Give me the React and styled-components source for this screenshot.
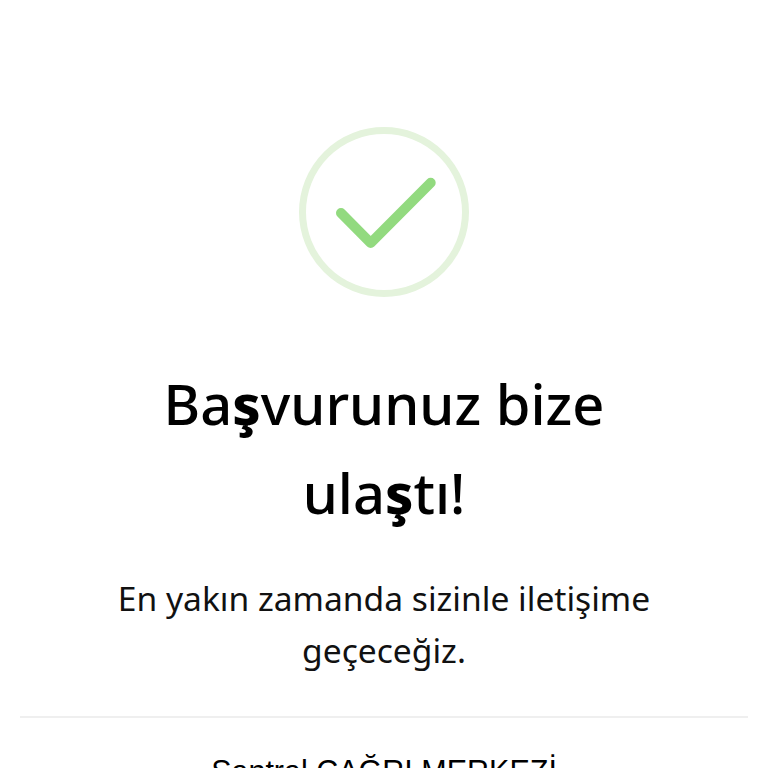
import styled, { createGlobalStyle } from "styled-components";

const GlobalStyle = createGlobalStyle`
    html, body {
        margin: 0;
        height: 768px;
        overflow: hidden;
        background: #FFFFFF;
    }
`

export default function App () {
    return (
        <>
        <GlobalStyle/>
        <Page>
            <SuccessIcon viewBox="0 0 172 172">
                <circle cx="86" cy="86" r="81.5" fill="none" stroke="#E4F3DC" strokeWidth="7"/>
                <polyline points="43,87 72.7,117 132.7,56.7" fill="none" stroke="#92DA7F" strokeWidth="10" strokeLinecap="round" strokeLinejoin="round"/>
            </SuccessIcon>
            <Title>Ba<Heavy>ş</Heavy>vurunuz bize<br/>ula<Heavy>ş</Heavy>tı!</Title>
            <Message>En yakın zamanda sizinle iletişime<br/>geçeceğiz.</Message>
            <Divider/>
            <CallCenter>Santral ÇAĞRI MERKEZİ</CallCenter>
        </Page>
        </>
    )
}

const Page = styled.div`
    display:flex;
    flex-direction:column;
    align-items:center;
    width:768px;
    height:768px;
    padding-top:126px;
    box-sizing:border-box;
    overflow:hidden;
    background:#FFFFFF;
    color:#000000;
    font-family:"Noto Sans", sans-serif;
`
const SuccessIcon = styled.svg`
    width:172px;
    height:172px;
    flex-shrink:0;
`
const Title = styled.h1`
    margin:61px 0 0 0;
    font-size:56px;
    font-weight:500;
    line-height:89px;
    text-align:center;
`
const Heavy = styled.span`
    font-weight:800;
`
const Message = styled.p`
    margin:35px 0 0 0;
    font-size:33.6px;
    font-weight:400;
    line-height:52px;
    color:#111111;
    text-align:center;
`
const Divider = styled.div`
    flex-shrink:0;
    width:728px;
    height:2px;
    margin-top:40px;
    background:#EFEFEF;
`
const CallCenter = styled.p`
    margin:33px 0 0 0;
    font-family:"Liberation Sans", sans-serif;
    font-size:30.5px;
    line-height:40px;
    white-space:nowrap;
    color:#000000;
`
